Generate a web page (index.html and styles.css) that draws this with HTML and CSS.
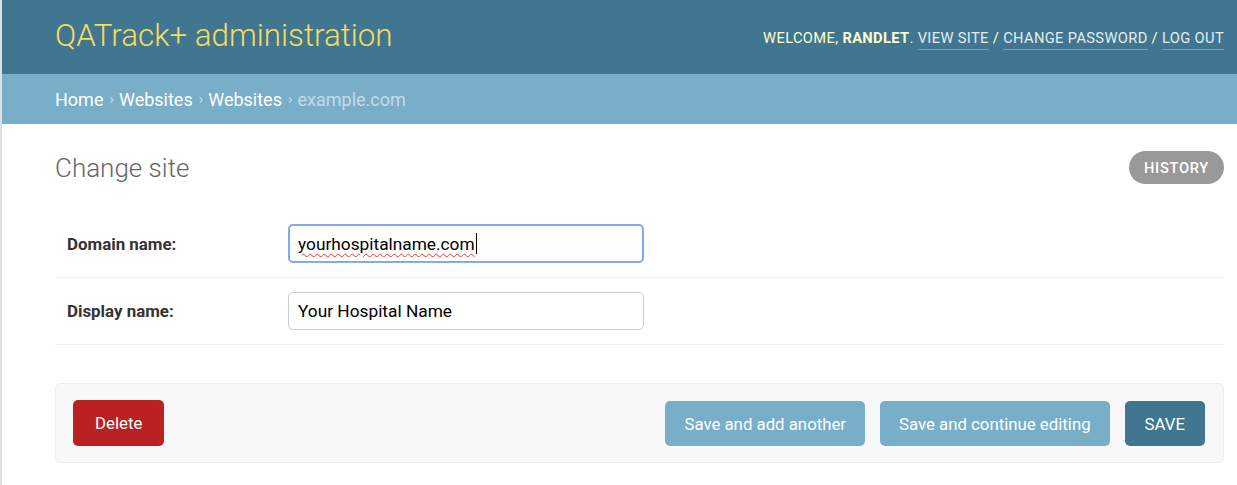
FILE: index.html
```html
<!DOCTYPE html>
<html lang="en">
<head>
<meta charset="utf-8">
<title>Change site | QATrack+ administration</title>
<link rel="stylesheet" href="styles.css">
</head>
<body>
<div class="page">
  <header class="header">
    <h1 class="branding">QATrack+ administration</h1>
    <div class="user-tools">
      Welcome, <strong>randlet</strong>.
      <a href="#">View site</a> /
      <a href="#">Change password</a> /
      <a href="#">Log out</a>
    </div>
  </header>
  <nav class="breadcrumbs">
    <a href="#">Home</a><span class="sep">›</span><a href="#">Websites</a><span class="sep">›</span><a href="#">Websites</a><span class="sep">›</span><span class="current">example.com</span>
  </nav>
  <main class="content">
    <div class="content-head">
      <h1 class="title">Change site</h1>
      <a href="#" class="history">History</a>
    </div>
    <form class="form">
      <div class="form-row">
        <label class="label">Domain name:</label>
        <div class="field field-focus"><span class="typo">yourhospitalname.com</span><span class="caret"></span></div>
      </div>
      <div class="form-row">
        <label class="label" for="name">Display name:</label>
        <input class="field" id="name" type="text" value="Your Hospital Name">
      </div>
      <div class="submit-row">
        <a href="#" class="btn btn-delete">Delete</a>
        <div class="submit-actions">
          <button type="button" class="btn btn-light">Save and add another</button>
          <button type="button" class="btn btn-light">Save and continue editing</button>
          <button type="button" class="btn btn-save">SAVE</button>
        </div>
      </div>
    </form>
  </main>
</div>
</body>
</html>
```

FILE: styles.css
```css
* { box-sizing: border-box; }
html, body { margin: 0; padding: 0; }
body {
  font-family: Roboto, "Liberation Sans", sans-serif;
  background: #fff;
  color: #333;
  height: 485px;
  overflow: hidden;
}
.page {
  border-left: 2px solid #dde1e6;
  min-height: 485px;
}
.header {
  height: 74px;
  background: #417690;
  display: flex;
  align-items: center;
  justify-content: space-between;
  padding: 0 13px 0 53px;
}
.branding {
  margin: 0;
  font-weight: 300;
  font-size: 31.3px;
  color: #f5dd5d;
  line-height: 40px;
  position: relative;
  top: -1px;
}
.user-tools {
  font-size: 14.67px;
  letter-spacing: 0.36px;
  text-transform: uppercase;
  color: #ffc;
  padding-top: 2px;
}
.user-tools strong { font-weight: 700; }
.user-tools a {
  color: #e4edf2;
  text-decoration: none;
  border-bottom: 1px solid rgba(255,255,255,0.3);
  padding-bottom: 2px;
}
.breadcrumbs {
  height: 50px;
  background: #79aec8;
  padding: 0 13px 0 53px;
  display: flex;
  align-items: center;
  font-size: 18px;
  color: #fff;
}
.breadcrumbs a { color: #fff; text-decoration: none; }
.breadcrumbs .sep { color: #c4dce8; margin: 0 5px 0 6px; font-size: 15px; }
.breadcrumbs .current { color: #c4dce8; }
.content {
  padding: 27px 13px 0 53px;
}
.content-head {
  display: flex;
  justify-content: space-between;
  align-items: flex-start;
  margin-bottom: 24px;
}
.title {
  margin: 0;
  font-weight: 300;
  font-size: 26px;
  line-height: 35px;
  color: #666;
}
.history {
  height: 33px;
  padding: 0 15px;
  border-radius: 17px;
  background: #999;
  color: #fff;
  text-decoration: none;
  font-size: 14.67px;
  font-weight: 500;
  letter-spacing: 0.7px;
  text-transform: uppercase;
  display: flex;
  align-items: center;
}
.form-row {
  display: flex;
  align-items: center;
  padding: 14px 12px 14px;
  border-bottom: 1px solid #eee;
}
.label {
  width: 221px;
  font-weight: 700;
  font-size: 16.9px;
  color: #333;
}
.field {
  width: 356px;
  height: 38px;
  border: 1px solid #ccc;
  border-radius: 5px;
  padding: 0 9px;
  font-family: Roboto, "Liberation Sans", sans-serif;
  font-size: 17.3px;
  color: #000;
  display: flex;
  align-items: center;
  background: #fff;
}
.field-focus {
  height: 39px;
  border: 2px solid #82aaee;
  padding-left: 8px;
}
.typo {
  text-decoration: underline wavy #e33;
  text-decoration-thickness: 1px;
  text-underline-offset: 3px;
}
.caret {
  width: 1px;
  height: 21px;
  background: #000;
  margin-left: 1px;
}
.submit-row {
  margin-top: 38px;
  background: #f8f8f8;
  border: 1px solid #eee;
  border-radius: 5px;
  padding: 15px 18px 16px 17px;
  display: flex;
  justify-content: space-between;
  align-items: center;
}
.submit-actions {
  display: flex;
  gap: 15px;
  margin-top: 2px;
}
.btn {
  height: 45px;
  border: none;
  border-radius: 5px;
  padding: 0 19px;
  font-family: Roboto, "Liberation Sans", sans-serif;
  font-size: 16.8px;
  color: #fff;
  text-decoration: none;
  display: flex;
  align-items: center;
  cursor: pointer;
}
.btn-delete {
  height: 46px;
  background: #ba2121;
  padding: 0 22px;
}
.btn-light { background: #79aec8; }
.btn-save { background: #417690; padding: 0 20px; }
```
